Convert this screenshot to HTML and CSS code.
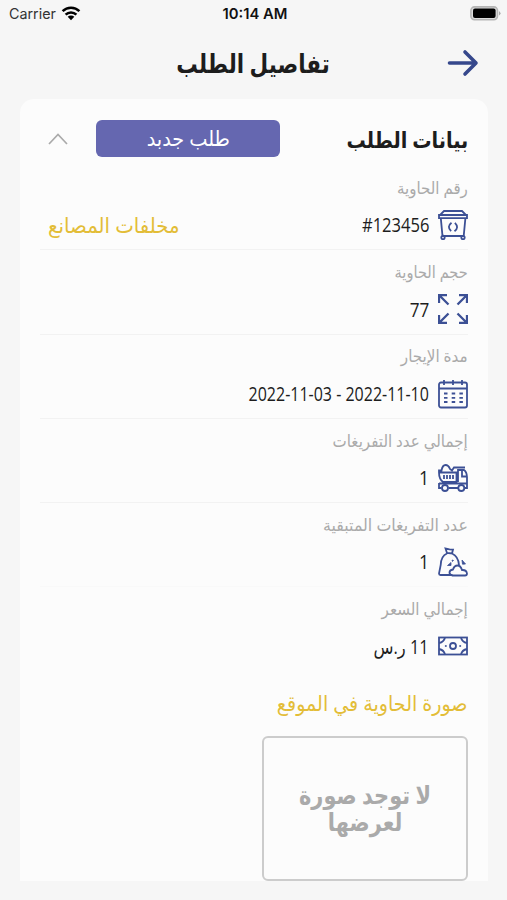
FILE: index.html
```html
<!DOCTYPE html>
<html lang="ar" dir="rtl">
<head>
<meta charset="utf-8">
<title>تفاصيل الطلب</title>
<link rel="stylesheet" href="styles.css">
</head>
<body>
<header class="status" dir="ltr">
  <div class="carrier"><span>Carrier</span>
    <svg width="20" height="15" viewBox="0 0 20 15"><g fill="none" stroke="#000" stroke-width="2.5"><path d="M1.6 5.2a12 12 0 0 1 16.8 0"/><path d="M4.6 8.6a7.7 7.7 0 0 1 10.8 0"/></g><path d="M6.7 10.8a4.7 4.7 0 0 1 6.6 0L10 14.2z"/></svg>
  </div>
  <div class="time">10:14 AM</div>
  <svg class="battery" width="31" height="15" viewBox="0 0 31 15"><rect x=".9" y=".9" width="26.600" height="12.800" rx="3.6" fill="#ddd" stroke="#b5b5b5" stroke-width="1.6"/><rect x="3" y="2.6" width="22.6" height="9.3" rx="2" fill="#000"/><path d="M29 5q3 2.300 0 4.600z" fill="#aaa"/></svg>
</header>
<nav class="nav">
  <svg class="back" width="32" height="28" viewBox="0 0 32 28" fill="none" stroke="#36488c" stroke-width="3.600" stroke-linecap="round" stroke-linejoin="round"><path d="M2.500 14h26M18 3 29 14 18 25"/></svg>
  <h1><span class="fit t-title">تفاصيل الطلب</span></h1>
</nav>
<main class="card">
  <div class="head">
    <h2><span class="fit t-head">بيانات الطلب</span></h2>
    <div class="badge"><span class="fit t-badge">طلب جدبد</span></div>
    <svg class="chev" width="20" height="12" viewBox="0 0 20 12" fill="none" stroke="#aaa" stroke-width="1.700"><path d="M1 11 10 1.500 19 11"/></svg>
  </div>
  <section class="row">
    <div class="label"><span class="fit t-l1">رقم الحاوية</span></div>
    <div class="value">
      <svg class="icon" viewBox="0 0 30 30"><path d="M6 1h18l4 4H2zM1 5h28v3.200H1zM2.800 8.200 4.500 26h21.200L27.400 8.200M4.500 26v-2M10.200 26h9.600"/><circle cx="5" cy="27.600" r="1.700"/><circle cx="25" cy="27.600" r="1.700"/><path d="M13.500 12.700q-5 3.800-.4 8.400M16.500 21.300q5-3.800.4-8.400"/></svg>
      <span class="fit t-v1" dir="ltr">#123456</span>
      <span class="kind"><span class="fit t-kind">مخلفات المصانع</span></span>
    </div>
  </section>
  <section class="row">
    <div class="label"><span class="fit t-l2">حجم الحاوية</span></div>
    <div class="value">
      <svg class="icon bold" viewBox="0 0 30 30"><path d="M1 9V1h8M1 1l9.500 9.500M21 1h8v8M29 1l-9.500 9.500M1 21v8h8M1 29l9.500-9.500M29 21v8h-8M29 29l-9.500-9.500"/></svg>
      <span class="fit t-v2">77</span>
    </div>
  </section>
  <section class="row">
    <div class="label"><span class="fit t-l3">مدة الإيجار</span></div>
    <div class="value">
      <svg class="icon" viewBox="0 0 30 30"><rect x="1" y="3.500" width="28" height="25" rx="2"/><path d="M1 9.500h28M6 1v5M15 1v5M24 1v5"/><path stroke-dasharray="3.500 4.200" d="M6 14.500h19M6 18.800h19M6 23h19"/></svg>
      <span class="fit t-v3" dir="ltr">2022-11-03 - 2022-11-10</span>
    </div>
  </section>
  <section class="row">
    <div class="label"><span class="fit t-l4">إجمالي عدد التفريغات</span></div>
    <div class="value">
      <svg class="icon" viewBox="0 0 30 30"><path d="M1 9.500V7.500h2.500Q4.500 2 7.500 2q3 0 4.500 4l2 1.500 2-3h11M1 9.500h17.500v9.500H5Q1 16 1 9.500zM6 12v4M9 12v4M12 12v4M15 12v4M20 19V7h6q2.800 2 3 7v11h-2.500M24 7v6.500h5M1 20v5h2.500M10.500 25h9.500M1 20.500h28"/><circle cx="7" cy="25" r="3"/><circle cx="23.300" cy="25" r="3"/></svg>
      <span class="fit t-v4">1</span>
    </div>
  </section>
  <section class="row">
    <div class="label"><span class="fit t-l5">عدد التفريغات المتبقية</span></div>
    <div class="value">
      <svg class="icon" viewBox="0 0 30 30"><path d="M9 6 7.500 1.500l4 .8L15 2.500 14 6.500zM9 6.500Q3 9 2.700 18L1 26.500q0 1.500 1.500 1.500h12M14 6.500q6.500 3 7 11.500M14.500 28.500q-3-.6-3-3t3.500-3q1.300-4 4.500-4t4.500 4.500q4.500-.3 5 3.500 0 2-2 2z"/><path class="solid" d="m9.500 18.500 3.500-3v3zM14 13l1.500.5-1 1zM24 13l3.500 4-3 .2z"/></svg>
      <span class="fit t-v4">1</span>
    </div>
  </section>
  <section class="row last">
    <div class="label"><span class="fit t-l6">إجمالي السعر</span></div>
    <div class="value">
      <svg class="icon" viewBox="0 0 30 30"><rect x="1" y="6.500" width="28" height="17"/><path d="M1 12q5-1 6-5.500M29 12q-5-1-6-5.500M1 18q5 1 6 5.500M29 18q-5 1-6 5.500"/><circle cx="15" cy="15" r="3"/><path class="solid" d="M7.300 14.500h1v1h-1zM21.700 14.500h1v1h-1z"/></svg>
      <span class="fit t-v6">11 ر.س</span>
    </div>
  </section>
  <h3><span class="fit t-photo">صورة الحاوية في الموقع</span></h3>
  <div class="photo"><p class="fit t-p">لا توجد صورة<br>لعرضها</p></div>
</main>
</body>
</html>
```

FILE: styles.css
```css
* { box-sizing: border-box; }
body { margin: 0; height: 900px; overflow: hidden; background: #f6f6f6; color: #1d1d1d; font-family: "Open Sans", "DejaVu Sans", sans-serif; }
svg { display: block; flex: none; }
h1, h2, h3, p { margin: 0; }
.status { height: 27px; display: grid; grid-template-columns: 1fr auto 1fr; align-items: center; padding: 0 6px 0 9px; font-family: Inter, sans-serif; color: #111; }
.carrier { display: flex; align-items: center; gap: 5px; font-size: 14.3px; color: #333; }
.time { font-size: 14.8px; font-weight: 600; }
.battery { justify-self: end; }
.nav { height: 72px; display: grid; grid-template-columns: 32px 1fr 32px; padding: 0 28px; align-items: center; }
.nav h1 { text-align: center; font-size: 26px; }
.fit { display: inline-block; white-space: nowrap; line-height: 1; transform-origin: 100% 50%; }
.card { width: 468px; height: 782px; margin: 0 19px 0 20px; padding: 21px 20px 0; background: #fcfcfc; border-radius: 14px 14px 0 0; }
.head { display: flex; align-items: center; height: 37px; }
.head h2 { width: 188px; font-size: 22px; }
.badge { width: 184px; height: 37px; border-radius: 6px; background: #6567b0; color: #fff; display: flex; align-items: center; justify-content: center; font-size: 21px; }
.chev { margin-right: 28px; }
.row { height: 84.3px; display: flex; flex-direction: column; border-bottom: 1px solid #f2f2f2; }
.head + .row { margin-top: 9px; }
.row:nth-of-type(5) { border-color: #f9f9f9; }
.row.last { border: 0; }
.label { height: 44px; display: flex; align-items: center; color: #aaa; font-size: 16.5px; }
.value { height: 30px; display: flex; align-items: center; gap: 9px; font-size: 19.5px; }
.icon { width: 30px; height: 30px; fill: none; stroke: #3c5095; stroke-width: 1.8; }
.bold { stroke-width: 2.3; }
.solid { fill: #3c5095; stroke-width: .8; }
.kind { margin-right: auto; padding-left: 8px; color: #e3bd37; font-size: 21px; }
.kind .fit { transform-origin: 0 50%; }
h3 { height: 64px; display: flex; align-items: center; color: #e3bd37; font-size: 21px; font-weight: 400; }
.photo { width: 206px; height: 145px; border: 2px solid #ccc; border-radius: 6px; display: flex; align-items: center; justify-content: center; color: #aaa; font-size: 25px; font-weight: 700; text-align: center; }
.photo .fit { line-height: 27px; transform-origin: center; }

/* Condensed widths of the individual texts */
.t-title { transform: scaleX(.825); transform-origin: center; }
.t-head { transform: scaleX(.875); }
.t-badge { transform: scaleX(.92); transform-origin: center; }
.t-l1 { transform: scaleX(.91); }
.t-l2 { transform: scaleX(.885); }
.t-l3 { transform: scaleX(.92); }
.t-l4 { transform: scaleX(.915); }
.t-l5 { transform: scaleX(.96); }
.t-l6 { transform: scaleX(.92); }
.t-v1 { transform: scaleX(.85); }
.t-v2 { transform: scaleX(.88); }
.t-v3 { transform: scaleX(.82); }
.t-v4 { transform: scaleX(.9); }
.t-v6 { transform: scaleX(.84); }
.t-kind { transform: scaleX(.94); }
.t-photo { transform: scaleX(.91); }
.t-p { transform: scaleX(.835); }
```
